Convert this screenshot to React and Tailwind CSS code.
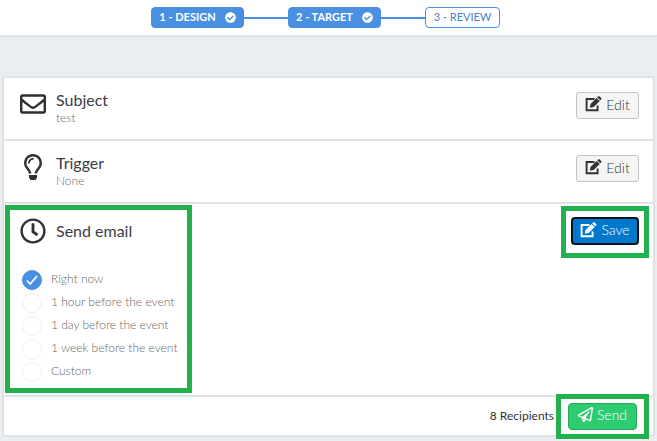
import { useState } from "react";
import { FaCheckCircle, FaRegClock, FaRegEnvelope, FaRegLightbulb, FaRegPaperPlane } from "react-icons/fa";

function EditIcon() {
  return (
    <svg viewBox="0 0 17 16" className="h-4 w-[17px] shrink-0" fill="none" aria-hidden="true">
      <path d="M9.5 3H1.6v11.2h11V9.5" stroke="currentColor" strokeWidth="1.9" />
      <path d="M4.800 11.800l.7-3.900 6-6 3.300 3.200-6.100 6z" fill="currentColor" />
      <path d="M12.200 1.400l.9-.9c.5-.5 1.100-.5 1.600 0l1.500 1.400c.4.5.4 1 0 1.500l-.9.9z" fill="currentColor" />
    </svg>
  );
}

function Step({ label, done }) {
  return (
    <li
      className={
        done
          ? "flex h-[21px] w-[93px] items-center justify-center gap-[9px] rounded-[4px] border border-[#4a90e2] bg-[#4a90e2] text-[11px] font-bold text-white"
          : "flex h-[21px] w-[75px] items-center justify-center rounded-[4px] border border-[#4a90e2] bg-white text-[11px] text-[#4a80c4]"
      }
      aria-current={done ? undefined : "step"}
    >
      {label}
      {done && <FaCheckCircle className="size-[11px]" />}
    </li>
  );
}

function Connector() {
  return <li aria-hidden="true" className="h-[2px] w-11 bg-[#4a90e2]" />;
}

function Row({ icon, title, detail, children }) {
  return (
    <section className="border-b-2 border-[#e0e3e5] px-[14px]">
      <div className="flex h-[61px] items-start pt-[13px]">
        <span className="flex w-[30px] justify-center text-[#2f3033]">{icon}</span>
        <div className="ml-2 flex-1">
          <h2 className="text-[16px] leading-[18px] text-[#3a3d42]">{title}</h2>
          <p className="mt-px text-[12px] leading-4 font-light text-[#6b6b6b]">{detail}</p>
        </div>
        <div className="pt-px">{children}</div>
      </div>
    </section>
  );
}

function EditButton() {
  return (
    <button
      type="button"
      className="flex h-[27px] w-[63px] items-center justify-center gap-1 rounded-[3px] border border-[#c4c4c4] bg-[#f5f5f5] pb-[3px] text-[14px] font-light text-[#333]"
    >
      <EditIcon />
      Edit
    </button>
  );
}

const choices = [
  "Right now",
  "1 hour before the event",
  "1 day before the event",
  "1 week before the event",
  "Custom",
];

export default function App() {
  const [choice, setChoice] = useState(choices[0]);

  return (
    <div className="min-h-screen bg-[#ebeef0] font-['Lato',sans-serif]">
      <header className="border-b border-[#dcdfe1] bg-white pt-[7px] pr-[6px] pb-[7px] shadow-xs">
        <ol className="flex items-center justify-center">
          <Step label="1 - DESIGN" done />
          <Connector />
          <Step label="2 - TARGET" done />
          <Connector />
          <Step label="3 - REVIEW" />
        </ol>
      </header>

      <main className="px-[2px] pt-10">
        <div className="rounded-[3px] border-2 border-[#e0e3e5] bg-white">
          <Row icon={<FaRegEnvelope className="size-[26px]" />} title="Subject" detail="test">
            <EditButton />
          </Row>
          <Row icon={<FaRegLightbulb className="size-[26px]" />} title="Trigger" detail="None">
            <EditButton />
          </Row>

          <section className="relative border-b-2 border-[#e0e3e5] px-[14px] pt-[13px] pb-3">
            <div className="flex h-7 items-center">
              <span className="flex w-[30px] justify-center text-[#2f3033]">
                <FaRegClock className="size-[26px]" />
              </span>
              <h2 id="send-time-title" className="ml-2 flex-1 text-[16px] leading-[18px] text-[#3a3d42]">
                Send email
              </h2>
              <div className="relative">
                <button
                  type="button"
                  className="flex h-7 w-[68px] items-center justify-center gap-1 rounded-[4px] border-2 border-[#0a1420] bg-[#0078cc] pb-[3px] text-[14px] font-light text-white"
                >
                  <EditIcon />
                  Save
                </button>
                <span className="pointer-events-none absolute -inset-x-[10px] -top-[11px] -bottom-[13px] border-5 border-[#22b14c]" />
              </div>
            </div>
            <fieldset aria-labelledby="send-time-title" className="mt-[23px] ml-1">
              {choices.map((text) => (
                <label key={text} className="flex h-[23px] items-center gap-[9px] text-[12px] font-light text-[#666]">
                  <span className="relative flex">
                    <input
                      type="radio"
                      name="send-time"
                      checked={choice === text}
                      onChange={() => setChoice(text)}
                      className="peer size-5 appearance-none rounded-full border border-[#efefef] bg-white checked:border-[#4a90e2] checked:bg-[#4a90e2]"
                    />
                    <svg
                      viewBox="0 0 20 20"
                      className="pointer-events-none absolute inset-0 hidden size-5 peer-checked:block"
                      fill="none"
                      aria-hidden="true"
                    >
                      <path d="M5 10.500l3.200 3.500L15 6" stroke="white" strokeWidth="1.800" />
                    </svg>
                  </span>
                  <span className="pb-[2px]">{text}</span>
                </label>
              ))}
            </fieldset>
            <span className="pointer-events-none absolute top-px bottom-[2px] left-px w-[187px] border-5 border-[#22b14c]" />
          </section>

          <footer className="flex h-[38px] items-center justify-end gap-[14px] pr-4">
            <p className="text-[12px] text-[#333]">8 Recipients</p>
            <div className="relative">
              <button
                type="button"
                className="flex h-[27px] w-[69px] items-center justify-center gap-1 rounded-[4px] border border-[#28a75c] bg-[#2ecc71] pb-[3px] text-[14px] font-light text-white"
              >
                <FaRegPaperPlane className="size-[15px]" />
                Send
              </button>
              <span className="pointer-events-none absolute -inset-x-3 -inset-y-[9px] border-5 border-[#22b14c]" />
            </div>
          </footer>
        </div>
      </main>
    </div>
  );
}
